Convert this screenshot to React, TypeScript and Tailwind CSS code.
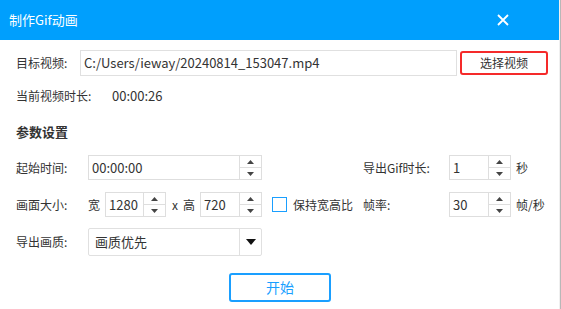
import React from "react";

const font = { fontFamily: '"Noto Sans CJK SC", "Noto Sans", sans-serif' };

function Spin({ value, w }: { value: string; w: string }) {
  return (
    <div className={`flex h-[25px] border border-[#dedede] bg-white ${w}`}>
      <div className="flex-1 flex items-center pl-[3px] text-[13px] text-[#333]">{value}</div>
      <div className="w-[22px] border-l border-[#dedede] flex flex-col">
        <div className="flex-1 flex items-center justify-center border-b border-[#dedede]">
          <svg width="7" height="4" viewBox="0 0 7 4"><path d="M0 4 L3.5 0 L7 4 Z" fill="#444" /></svg>
        </div>
        <div className="flex-1 flex items-center justify-center">
          <svg width="7" height="4" viewBox="0 0 7 4"><path d="M0 0 L7 0 L3.5 4 Z" fill="#444" /></svg>
        </div>
      </div>
    </div>
  );
}

export default function App() {
  return (
    <div className="w-[561px] h-[309px] flex bg-white" style={font}>
      <div className="w-[559px] h-full flex flex-col">
        <div className="h-[40px] bg-[#009ffd] flex items-center justify-between pl-[9px] pr-[50px]">
          <span className="text-white text-[13px]">制作Gif动画</span>
          <svg width="12" height="12" viewBox="0 0 12 12">
            <path d="M1 1 L11 11 M11 1 L1 11" stroke="white" strokeWidth="1.8" />
          </svg>
        </div>

        <div className="flex items-center mt-[10px] pl-[16px] h-[26px]">
          <span className="w-[64px] text-[12px] text-[#333]">目标视频:</span>
          <div className="w-[377px] h-[26px] border border-[#e0e0e0] flex items-center pl-[3px] text-[13px] text-[#333]">
            C:/Users/ieway/20240814_153047.mp4
          </div>
          <div className="ml-[3px] w-[88px] h-[24px] border-2 border-[#f52a2a] rounded-[3px] flex items-center justify-center text-[12px] text-[#333]">
            选择视频
          </div>
        </div>

        <div className="flex items-center mt-[11px] pl-[16px] h-[18px] text-[12px] text-[#333]">
          <span className="w-[96px]">当前视频时长:</span>
          <span className="text-[13px]">00:00:26</span>
        </div>

        <div className="mt-[17px] pl-[16px] h-[20px] flex items-center text-[13px] font-bold text-[#333]">参数设置</div>

        <div className="flex items-center mt-[13px] pl-[16px] h-[25px] text-[12px] text-[#333]">
          <span className="w-[72px]">起始时间:</span>
          <Spin value="00:00:00" w="w-[174px]" />
          <span className="ml-[101px] w-[86px]">导出Gif时长:</span>
          <Spin value="1" w="w-[62px]" />
          <span className="ml-[5px]">秒</span>
        </div>

        <div className="flex items-center mt-[12px] pl-[16px] h-[25px] text-[12px] text-[#333]">
          <span className="w-[72px]">画面大小:</span>
          <span className="w-[17px]">宽</span>
          <Spin value="1280" w="w-[61px]" />
          <span className="ml-[6px] w-[11px]">x</span>
          <span className="w-[17px]">高</span>
          <Spin value="720" w="w-[62px]" />
          <div className="ml-[10px] w-[15px] h-[15px] border-[1.5px] border-[#1a9fff] bg-white" />
          <span className="ml-[6px] w-[70px]">保持宽高比</span>
          <span className="w-[86px]">帧率:</span>
          <Spin value="30" w="w-[62px]" />
          <span className="ml-[5px]">帧/秒</span>
        </div>

        <div className="flex items-center mt-[11px] pl-[16px] h-[28px] text-[12px] text-[#333]">
          <span className="w-[72px]">导出画质:</span>
          <div className="w-[174px] h-[28px] border border-[#e0e0e0] rounded-[2px] flex">
            <div className="flex-1 flex items-center pl-[6px] text-[13px]">画质优先</div>
            <div className="w-[22px] border-l border-[#e0e0e0] flex items-center justify-center">
              <svg width="10" height="6" viewBox="0 0 10 6"><path d="M0 0 L10 0 L5 6 Z" fill="#111" /></svg>
            </div>
          </div>
        </div>

        <div className="flex mt-[17px] pl-[229px]">
          <div className="w-[102px] h-[29px] border-2 border-[#1a9fff] rounded-[3px] flex items-center justify-center text-[14px] text-[#1a9fff]">
            开始
          </div>
        </div>
      </div>
      <div className="w-[1px] h-full bg-[#f0f0f0]" />
      <div className="w-[1px] h-full bg-[#b8b8b8]" />
    </div>
  );
}
